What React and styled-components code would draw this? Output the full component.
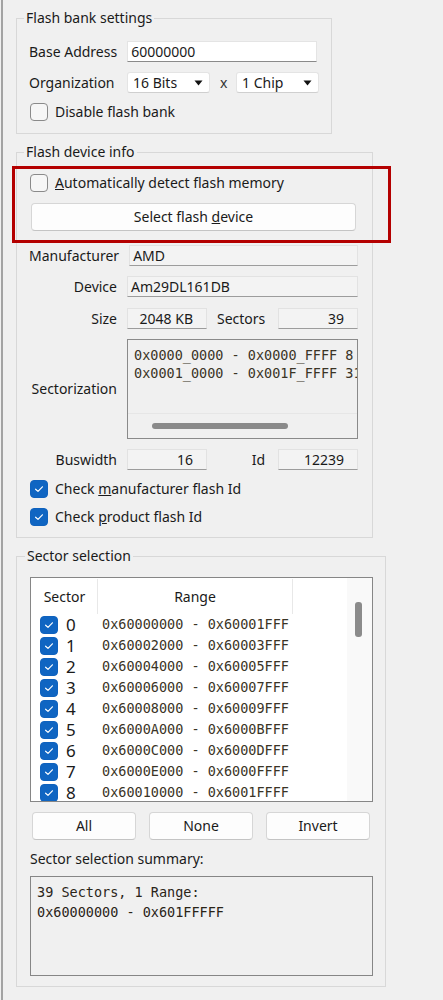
import React from "react";
import styled, { createGlobalStyle } from "styled-components";

const GlobalStyle = createGlobalStyle`
  html, body {
    margin: 0;
    padding: 0;
    background: #f0f0f0;
  }
  body {
    font-family: "Noto Sans", "Liberation Sans", sans-serif;
    font-size: 14px;
    color: #1a1a1a;
  }
  * {
    box-sizing: border-box;
  }
`

const Page = styled.div`
  margin-left: 1px;
  border-left: 2px solid #a3a3a3;
  min-height: 1000px;
  padding: 11px 0 0 13px;
  display: flex;
  flex-direction: column;
  align-items: flex-start;
  gap: 11px;
`

const Group = styled.fieldset`
  margin: 0;
  min-width: 0;
  width: ${p => p.$width}px;
  border: 1px solid #d8d8d8;
  padding: ${p => p.$pad};
`

const Legend = styled.legend`
  margin-left: -5px;
  padding: 0 2px;
  height: 14px;
  font-size: 14px;
  line-height: 14px;
  color: #1a1a1a;
`

const Stack = styled.div`
  display: flex;
  flex-direction: column;
  gap: ${p => p.$gap || 10}px;
`

const Row = styled.div`
  display: flex;
  align-items: center;
  gap: ${p => p.$gap ?? 10}px;
  height: ${p => p.$height || 21}px;
  margin-top: ${p => p.$mt || 0}px;
  padding-left: ${p => p.$indent || 0}px;
  line-height: 18px;
  white-space: nowrap;
`

const Label = styled.span`
  flex: 0 0 ${p => p.$width || 88}px;
  text-align: ${p => p.$align || "left"};
  padding-right: ${p => p.$padRight || 0}px;
`

const TextInput = styled.div`
  width: ${p => p.$width}px;
  height: 21px;
  background: #fff;
  border: 1px solid #e4e4e4;
  border-bottom-color: #8a8a8a;
  padding: 0 3px;
  line-height: 19px;
`

const ReadField = styled.div`
  flex: ${p => (p.$width ? `0 0 ${p.$width}px` : "1")};
  height: 21px;
  background: #f3f3f3;
  border: 1px solid #e2e2e2;
  border-bottom-color: #9c9c9c;
  padding: 0 ${p => (p.$right ? 13 : 3)}px 0 3px;
  line-height: 19px;
  text-align: ${p => (p.$right ? "right" : "left")};
`

const SelectBox = styled.div`
  width: 83px;
  height: 21px;
  background: #fff;
  border: 1px solid #e4e4e4;
  border-bottom-color: #cfcfcf;
  border-radius: 3px;
  padding: 0 6px 0 5px;
  display: flex;
  align-items: center;
  justify-content: space-between;
  line-height: 19px;
`

const Times = styled.span`
  width: 6px;
  text-align: center;
  color: #333;
`

const Box = styled.span`
  flex: 0 0 18px;
  width: 18px;
  height: 18px;
  border-radius: 4px;
  border: 1px solid ${p => (p.$checked ? "#0f62be" : "#8a8a8a")};
  background: ${p => (p.$checked ? "#0f65c2" : "#f6f6f6")};
  display: flex;
  align-items: center;
  justify-content: center;
`

const Button = styled.div`
  height: 28px;
  margin: 0 ${p => p.$inset || 0}px;
  background: #fdfdfd;
  border: 1px solid #d6d6d6;
  border-bottom-color: #c4c4c4;
  border-radius: 4px;
  display: flex;
  align-items: center;
  justify-content: center;
  line-height: 18px;
`

const Highlight = styled.div`
  position: relative;
  display: flex;
  flex-direction: column;
  gap: 11px;
  &::after {
    content: "";
    position: absolute;
    top: -8px;
    left: -17px;
    right: -33px;
    bottom: -12px;
    border: 3px solid #b40000;
    pointer-events: none;
  }
`

const Mono = styled.div`
  font-family: "DejaVu Sans Mono", "Liberation Mono", monospace;
  font-size: 13.5px;
  color: #3a3426;
  white-space: pre;
`

const SectorBox = styled.div`
  flex: 1;
  height: 100px;
  border: 1px solid #8a8a8a;
  background: #f0f0f0;
  display: flex;
  flex-direction: column;
  overflow: hidden;
`

const SectorText = styled(Mono)`
  flex: 1;
  padding: 6px 0 0 6px;
  line-height: 18px;
  overflow: hidden;
`

const HScroll = styled.div`
  flex: 0 0 25px;
  border-top: 1px solid #e6e6e6;
  padding: 9px 0 0 24px;
`

const HThumb = styled.div`
  width: 136px;
  height: 6px;
  border-radius: 3px;
  background: #8a8a8a;
`

const ListBox = styled.div`
  height: 225px;
  border: 1px solid #868686;
  background: #fff;
  display: flex;
  overflow: hidden;
`

const ListMain = styled.div`
  flex: 1;
  padding: 1px 0 0 1px;
  overflow: hidden;
`

const ListHeader = styled.div`
  display: grid;
  grid-template-columns: 66px 195px 1fr;
  height: 35px;
`

const HeadCell = styled.div`
  border-right: 1px solid ${p => (p.$last ? "transparent" : "#e8e8e8")};
  display: flex;
  align-items: center;
  justify-content: center;
  line-height: 18px;
`

const ListRow = styled.div`
  display: grid;
  grid-template-columns: 66px 195px;
  height: 21px;
  align-items: center;
`

const SectorCell = styled.div`
  display: flex;
  align-items: center;
  gap: 8px;
  height: 21px;
  padding-left: 8px;
  font-size: 17px;
  line-height: 21px;
`

const RangeCell = styled(Mono)`
  padding-left: 4px;
  line-height: 21px;
`

const VScroll = styled.div`
  flex: 0 0 25px;
  background: #f9f9f9;
  padding: 24px 0 0 8px;
`

const VThumb = styled.div`
  width: 7px;
  height: 35px;
  border-radius: 3px;
  background: #8b8b8b;
`

const ButtonRow = styled.div`
  display: grid;
  grid-template-columns: repeat(3, 1fr);
  gap: 13px;
  padding: 0 3px 0 2px;
`

const Caption = styled.div`
  margin-top: 2px;
  line-height: 14px;
  height: 14px;
`

const SummaryBox = styled(Mono)`
  height: 100px;
  border: 1px solid #868686;
  background: #f0f0f0;
  padding: 5px 0 0 6px;
  line-height: 20px;
  color: #2a2418;
`

const Check = ({ checked }) => (
  <Box $checked={checked}>
    {checked && (
      <svg width="12" height="12" viewBox="0 0 12 12">
        <path d="M2.6 6.2 L5 8.4 L9.4 3.8" fill="none" stroke="#fff" strokeWidth="1.2" strokeLinecap="round" strokeLinejoin="round" />
      </svg>
    )}
  </Box>
)

const Arrow = () => (
  <svg width="9" height="6" viewBox="0 0 9 6">
    <path d="M0.5 0.5 L8.5 0.5 L4.5 5.5 Z" fill="#111" />
  </svg>
)

const hex = n => "0x" + n.toString(16).toUpperCase().padStart(8, "0")

const sectors = Array.from({ length: 9 }, (_, i) => {
  const start = i < 8 ? 0x60000000 + i * 0x2000 : 0x60010000
  const size = i < 8 ? 0x2000 : 0x10000
  return { id: i, range: `${hex(start)} - ${hex(start + size - 1)}` }
})

export default function App() {
  return (
    <>
      <GlobalStyle />
      <Page>
        <Group $width={316} $pad="16px 12px 12px 12px">
          <Legend>Flash bank settings</Legend>
          <Stack>
            <Row>
              <Label>Base Address</Label>
              <TextInput $width={190}>60000000</TextInput>
            </Row>
            <Row>
              <Label>Organization</Label>
              <SelectBox>16 Bits <Arrow /></SelectBox>
              <Times>x</Times>
              <SelectBox>1 Chip <Arrow /></SelectBox>
            </Row>
            <Row $height={18} $gap={7} $indent={1}>
              <Check />
              <span>Disable flash bank</span>
            </Row>
          </Stack>
        </Group>

        <Group $width={357} $pad="15px 14px 11px 12px">
          <Legend>Flash device info</Legend>
          <Stack $gap={10}>
            <Highlight>
              <Row $height={18} $gap={7} $indent={1}>
                <Check />
                <span><u>A</u>utomatically detect flash memory</span>
              </Row>
              <Button $inset={2}>
                <span>Select flash <u>d</u>evice</span>
              </Button>
            </Highlight>
            <Row $mt={4}>
              <Label $align="right">Manufacturer</Label>
              <ReadField>AMD</ReadField>
            </Row>
            <Row>
              <Label $align="right">Device</Label>
              <ReadField>Am29DL161DB</ReadField>
            </Row>
            <Row $mt={1}>
              <Label $align="right">Size</Label>
              <ReadField $width={80} $right>2048 KB</ReadField>
              <Label $width={51}>Sectors</Label>
              <ReadField $width={80} $right>39</ReadField>
            </Row>
            <Row $height={100}>
              <Label $align="right">Sectorization</Label>
              <SectorBox>
                <SectorText>
                  {"0x0000_0000 - 0x0000_FFFF 8 x 8KB\n0x0001_0000 - 0x001F_FFFF 31 x 64KB"}
                </SectorText>
                <HScroll>
                  <HThumb />
                </HScroll>
              </SectorBox>
            </Row>
            <Row>
              <Label $align="right">Buswidth</Label>
              <ReadField $width={80} $right>16</ReadField>
              <Label $width={51} $align="right" $padRight={3}>Id</Label>
              <ReadField $width={80} $right>12239</ReadField>
            </Row>
            <Row $height={18} $gap={7} $indent={1}>
              <Check checked />
              <span>Check <u>m</u>anufacturer flash Id</span>
            </Row>
            <Row $height={18} $gap={7} $indent={1}>
              <Check checked />
              <span>Check <u>p</u>roduct flash Id</span>
            </Row>
          </Stack>
        </Group>

        <Group $width={370} $pad="14px 12px 10px 13px">
          <Legend>Sector selection</Legend>
          <Stack $gap={10}>
            <ListBox>
              <ListMain>
                <ListHeader>
                  <HeadCell>Sector</HeadCell>
                  <HeadCell>Range</HeadCell>
                  <HeadCell $last />
                </ListHeader>
                {sectors.map(s => (
                  <ListRow key={s.id}>
                    <SectorCell>
                      <Check checked />
                      <span>{s.id}</span>
                    </SectorCell>
                    <RangeCell>{s.range}</RangeCell>
                  </ListRow>
                ))}
              </ListMain>
              <VScroll>
                <VThumb />
              </VScroll>
            </ListBox>
            <ButtonRow>
              <Button>All</Button>
              <Button>None</Button>
              <Button>Invert</Button>
            </ButtonRow>
            <Caption>Sector selection summary:</Caption>
            <SummaryBox>{"39 Sectors, 1 Range:\n0x60000000 - 0x601FFFFF"}</SummaryBox>
          </Stack>
        </Group>
      </Page>
    </>
  )
}
